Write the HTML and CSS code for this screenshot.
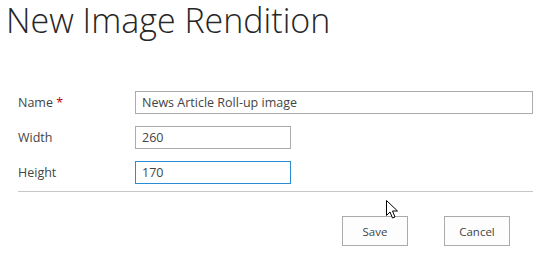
FILE: index.html
```html
<!DOCTYPE html>
<html>
<head>
<meta charset="utf-8">
<link rel="stylesheet" href="styles.css">
</head>
<body>
<h1 class="title">New Image Rendition</h1>
<div class="form">
  <div class="row">
    <label class="label">Name <span class="req">*</span></label>
    <div class="field wide">News Article Roll-up image</div>
  </div>
  <div class="row">
    <label class="label">Width</label>
    <div class="field">260</div>
  </div>
  <div class="row">
    <label class="label">Height</label>
    <div class="field focus">170</div>
  </div>
  <div class="sep"></div>
  <div class="buttons">
    <button class="btn">Save</button>
    <button class="btn">Cancel</button>
  </div>
  <svg class="cursor" width="14" height="20" viewBox="0 0 14 20"><path d="M0.5 0.5 L0.5 15.5 L4 12 L6.5 18 L9 17 L6.5 11 L11.5 11 Z" fill="#fff" stroke="#000" stroke-width="1"/></svg>
</div>
</body>
</html>
```
FILE: styles.css
```css
body {
  margin: 0;
  background: #fff;
  font-family: "Open Sans", "Segoe UI", sans-serif;
  color: #444;
}
.title {
  margin: 0;
  padding: 0 0 0 6px;
  font-weight: 300;
  font-size: 34px;
  line-height: 40px;
  color: #262626;
  letter-spacing: 0;
}
.form {
  position: relative;
  margin: 51px 0 0 18px;
  width: 515px;
}
.row {
  display: flex;
  align-items: center;
  height: 23px;
  margin-bottom: 12px;
}
.label {
  width: 117px;
  font-size: 12.5px;
  color: #444;
}
.req { color: #bf0000; }
.field {
  box-sizing: border-box;
  height: 23px;
  width: 156px;
  border: 1px solid #ababab;
  padding: 0 0 0 6px;
  font-size: 12.5px;
  line-height: 21px;
  color: #444;
}
.field.wide { width: 398px; }
.field.focus { border-color: #2a8dd4; }
.sep {
  margin-top: -5px;
  border-top: 1px solid #c6c6c6;
}
.buttons {
  display: flex;
  justify-content: flex-end;
  gap: 36px;
  margin-top: 24px;
  padding-right: 23px;
}
.btn {
  box-sizing: border-box;
  width: 66px;
  height: 30px;
  border: 1px solid #ababab;
  background: #fdfdfd;
  font-family: "Open Sans", "Segoe UI", sans-serif;
  font-size: 11.5px;
  color: #444;
  padding: 0;
}
.cursor {
  position: absolute;
  left: 368px;
  top: 109px;
}
```
